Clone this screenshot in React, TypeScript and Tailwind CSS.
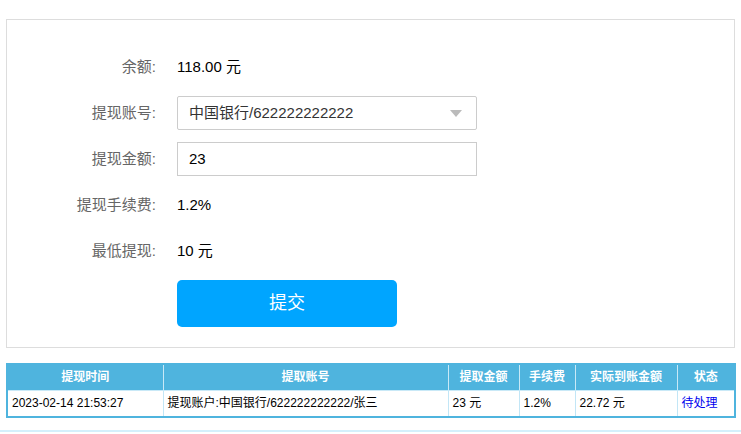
import React from 'react';

const rows = [
  { time: '2023-02-14 21:53:27', account: '提现账户:中国银行/622222222222/张三', amount: '23 元', fee: '1.2%', actual: '22.72 元', status: '待处理' },
];

function Label({ children }: { children: React.ReactNode }) {
  return <div className="w-[149px] text-right text-[15px] text-[#666]">{children}</div>;
}

export default function App() {
  return (
    <div className="w-[741px] h-[434px] bg-white overflow-hidden font-['Liberation_Sans','Noto_Sans_CJK_SC',sans-serif]">
      <div className="h-[19px]" />
      <div className="ml-[6px] w-[729px] border border-[#dddddd] pt-[30px] pb-[20px]">
        <div className="flex flex-col gap-3">
          <div className="flex items-center h-[34px]">
            <Label>余额:</Label>
            <div className="ml-[21px] text-[15px] text-black">118.00 元</div>
          </div>
          <div className="flex items-center h-[34px]">
            <Label>提现账号:</Label>
            <div className="ml-[21px] w-[300px] h-[34px] border border-[#cccccc] rounded-[2px] flex items-center justify-between px-[11px] text-[15px] text-[#333]">
              <span>中国银行/622222222222</span>
              <span className="w-0 h-0 border-l-[6px] border-r-[6px] border-t-[7px] border-l-transparent border-r-transparent border-t-[#bbbbbb] mr-[3px]" />
            </div>
          </div>
          <div className="flex items-center h-[34px]">
            <Label>提现金额:</Label>
            <div className="ml-[21px] w-[300px] h-[34px] border border-[#cccccc] flex items-center px-[11px] text-[15px] text-black">23</div>
          </div>
          <div className="flex items-center h-[34px]">
            <Label>提现手续费:</Label>
            <div className="ml-[21px] text-[15px] text-black">1.2%</div>
          </div>
          <div className="flex items-center h-[34px]">
            <Label>最低提现:</Label>
            <div className="ml-[21px] text-[15px] text-black">10 元</div>
          </div>
        </div>
        <div className="mt-[12px] ml-[170px] w-[220px] h-[47px] rounded-[5px] bg-[#00a5ff] flex items-center justify-center text-white text-[18px]">
          提交
        </div>
      </div>
      <div className="h-[15px]" />
      <table className="ml-[6px] w-[730px] border-collapse border-2 border-[#4fb4de] text-[12px] table-fixed">
        <colgroup>
          <col className="w-[156px]" />
          <col className="w-[285px]" />
          <col className="w-[71px]" />
          <col className="w-[56px]" />
          <col className="w-[102px]" />
          <col />
        </colgroup>
        <thead>
          <tr className="bg-[#4fb4de] text-white font-bold h-[26px]">
            {['提现时间', '提取账号', '提取金额', '手续费', '实际到账金额', '状态'].map((h) => (
              <th key={h} className="border border-[#c9e9f7] border-t-0 text-center">{h}</th>
            ))}
          </tr>
        </thead>
        <tbody>
          {rows.map((r, i) => (
            <tr key={i} className="h-[27px] text-black">
              <td className="border border-[#c2e6f6] pl-[4px]">{r.time}</td>
              <td className="border border-[#c2e6f6] pl-[4px]">{r.account}</td>
              <td className="border border-[#c2e6f6] pl-[4px]">{r.amount}</td>
              <td className="border border-[#c2e6f6] pl-[4px]">{r.fee}</td>
              <td className="border border-[#c2e6f6] pl-[4px]">{r.actual}</td>
              <td className="border border-[#c2e6f6] pl-[4px] text-[#0000ee]">{r.status}</td>
            </tr>
          ))}
        </tbody>
      </table>
      <div className="mt-[12px] h-[2px] bg-[#d4f0fc]" />
    </div>
  );
}
